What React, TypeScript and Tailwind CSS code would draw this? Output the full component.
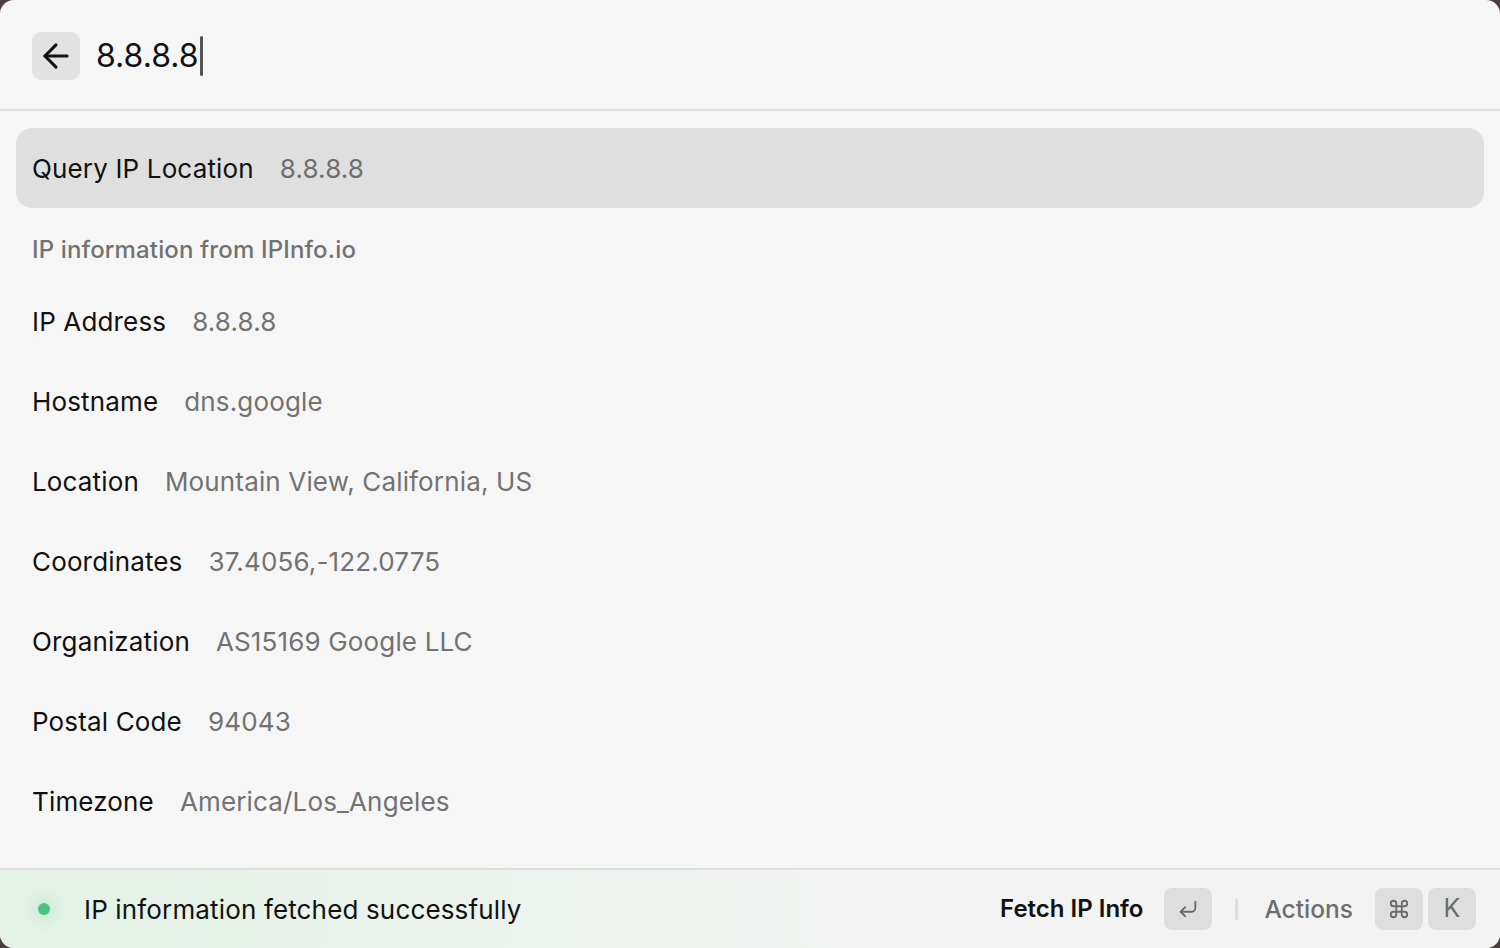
import { ArrowLeft, CornerDownLeft, Command } from "lucide-react";

const rows = [
  { title: "IP Address", value: "8.8.8.8" },
  { title: "Hostname", value: "dns.google" },
  { title: "Location", value: "Mountain View, California, US" },
  { title: "Coordinates", value: "37.4056,-122.0775" },
  { title: "Organization", value: "AS15169 Google LLC" },
  { title: "Postal Code", value: "94043" },
  { title: "Timezone", value: "America/Los_Angeles" },
];

const Kbd = ({ children }: { children: React.ReactNode }) => (
  <span className="grid h-[42px] w-[48px] place-content-center rounded-[8px] bg-[#dedede] text-[25px] text-[#6b6b6b]">
    {children}
  </span>
);

export default function App() {
  return (
    <div className="h-[948px] w-[1500px] bg-[#4a4040]">
      <div
        className="flex h-full w-full flex-col overflow-hidden rounded-[14px] bg-[#f6f6f6] text-[#111] tracking-[0.15px]"
        style={{ fontFamily: "Inter, 'Noto Sans', sans-serif" }}
      >
        <header className="flex h-[111px] shrink-0 items-center gap-4 border-b-2 border-[#dddddd] px-8 pt-[3px]">
          <button className="grid size-12 place-content-center rounded-[9px] bg-[#e2e2e2]">
            <ArrowLeft size={38} strokeWidth={1.9} className="text-[#111]" />
          </button>
          <div className="flex items-center text-[32px] leading-none tracking-normal">
            <span>8.8.8.8</span>
            <span className="ml-[1px] h-[40px] w-[3px] rounded-sm bg-[#555]" />
          </div>
        </header>

        <main className="flex-1 px-4 pt-[17px]">
          <div className="flex h-20 items-center gap-[26px] rounded-[16px] bg-[#dfdfdf] px-4 text-[26px]">
            <span>Query IP Location</span>
            <span className="text-[#6e6e6e]">8.8.8.8</span>
          </div>

          <p className="h-[73px] px-4 pt-[26px] text-[24px] font-medium leading-8 text-[#727272]">
            IP information from IPInfo.io
          </p>

          <ul>
            {rows.map((row) => (
              <li
                key={row.title}
                className="flex h-20 items-center gap-[26px] px-4 text-[26px]"
              >
                <span>{row.title}</span>
                <span className="text-[#727272]">{row.value}</span>
              </li>
            ))}
          </ul>
        </main>

        <footer className="flex h-[80px] shrink-0 items-center border-t-2 border-[#dcdfdc] bg-[linear-gradient(90deg,#e3f2e6_0%,#edf3ee_35%,#f3f3f3_60%)] pl-[38px] pr-6">
          <span className="size-3 rounded-full bg-[#4cc47f] shadow-[0_0_14px_6px_rgba(76,196,127,0.15)]" />
          <span className="ml-[34px] text-[26px]">IP information fetched successfully</span>

          <div className="ml-auto flex items-center">
            <span className="text-[24px] font-semibold tracking-normal">Fetch IP Info</span>
            <span className="ml-[21px]">
              <Kbd>
                <CornerDownLeft size={22} strokeWidth={2} />
              </Kbd>
            </span>
            <span className="ml-[23px] mr-[26px] h-[22px] w-[3px] rounded-full bg-[#dddddd]" />
            <span className="text-[24.5px] font-medium tracking-normal text-[#6e6e6e]">Actions</span>
            <span className="ml-[22px] flex gap-[5px]">
              <Kbd>
                <Command size={22} strokeWidth={2} />
              </Kbd>
              <Kbd>K</Kbd>
            </span>
          </div>
        </footer>
      </div>
    </div>
  );
}
